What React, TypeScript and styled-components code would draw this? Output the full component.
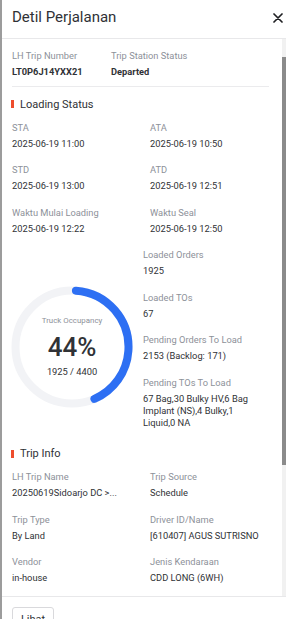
import styled, { createGlobalStyle } from "styled-components";

const GlobalStyle = createGlobalStyle`
  html, body {
    margin: 0;
    padding: 0;
    background: #ffffff;
    overflow: hidden;
  }
  body {
    font-family: Roboto, "Liberation Sans", Arial, sans-serif;
    color: #333333;
  }
`;

const Panel = styled.div`
  box-sizing: border-box;
  width: 297px;
  border-left: 2px solid #9c9c9c;
  background: #ffffff;
  display: flex;
  flex-direction: column;
`;

const Header = styled.div`
  height: 38px;
  border-bottom: 1px solid #e8e8ea;
  display: flex;
  align-items: center;
  justify-content: space-between;
  padding: 0 14px 0 10px;
`;

const Title = styled.h1`
  margin: 0;
  font-size: 15px;
  font-weight: 400;
  color: #2f3136;
  line-height: 20px;
  margin-top: -4px;
`;

const CloseBtn = styled.button`
  border: none;
  background: none;
  padding: 0;
  width: 10px;
  height: 10px;
  display: flex;
  cursor: pointer;
  margin-top: -3px;
`;

const Body = styled.div`
  height: 557px;
  flex: none;
  display: flex;
`;

const Scroll = styled.div`
  flex: 1;
  min-width: 0;
  overflow: hidden;
  box-sizing: border-box;
  padding: 10px 13px 24px 10px;
`;

const Track = styled.div`
  width: 15px;
  flex: none;
  background: #f1f1f1;
  display: flex;
  flex-direction: column;
`;

const Arrow = styled.div<{ $down?: boolean }>`
  height: 15px;
  flex: none;
  display: flex;
  align-items: center;
  justify-content: center;

  &::after {
    content: "";
    border-left: 4px solid transparent;
    border-right: 4px solid transparent;
    ${(p) =>
      p.$down
        ? "border-top: 4px solid #a3a3a3;"
        : "border-bottom: 4px solid #a3a3a3;"}
  }
`;

const ThumbArea = styled.div`
  flex: 1;
  padding-top: 3px;
`;

const Thumb = styled.div`
  height: 408px;
  background: #8b8b8b;
`;

const TopRow = styled.div`
  display: grid;
  grid-template-columns: 99px 1fr;
  padding-bottom: 8px;
  border-bottom: 1px solid #ebebed;
`;

const SectionTitle = styled.div<{ $top: number }>`
  display: flex;
  align-items: center;
  gap: 6px;
  margin-top: ${(p) => p.$top}px;
  height: 16px;
  font-size: 11px;
  color: #2f3136;

  &::before {
    content: "";
    width: 3px;
    height: 8px;
    margin-left: -1px;
    background: #ee4d2d;
  }
`;

const Grid = styled.div`
  display: grid;
  grid-template-columns: 138px 1fr;
  row-gap: 13.5px;
  margin-top: 8.5px;
`;

const Field = styled.div``;

const Label = styled.div`
  font-size: 9.3px;
  line-height: 14px;
  color: #8d9199;
  white-space: nowrap;
`;

const Value = styled.div<{ $bold?: boolean }>`
  margin-top: 3px;
  font-size: 9.3px;
  line-height: 12px;
  color: #303236;
  font-weight: ${(p) => (p.$bold ? 700 : 400)};
`;

const Occupancy = styled.div`
  display: flex;
  margin-top: 13.5px;
`;

const GaugeCol = styled.div`
  width: 131px;
  flex: none;
`;

const Gauge = styled.div`
  position: relative;
  width: 122px;
  height: 122px;
  margin: 38px 0 0 -1px;
  display: flex;
  flex-direction: column;
  align-items: center;
  justify-content: center;

  svg {
    position: absolute;
    inset: 0;
  }
`;

const GaugeCaption = styled.div`
  font-size: 7.9px;
  line-height: 10px;
  color: #8d9199;
`;

const GaugePercent = styled.div`
  font-size: 26px;
  font-weight: 500;
  line-height: 30px;
  margin-top: 6px;
  color: #303236;
`;

const GaugeCount = styled.div`
  font-size: 9.3px;
  line-height: 12px;
  margin-top: 4px;
  color: #303236;
`;

const StatCol = styled.div`
  flex: 1;
  max-width: 112px;
  display: flex;
  flex-direction: column;
  gap: 13.5px;
`;

const Footer = styled.div`
  border-top: 1px solid #e8e8ea;
  padding: 10px 10px;
`;

const Button = styled.button`
  width: 42px;
  height: 24px;
  border: 1px solid #d9d9dc;
  border-radius: 3px;
  background: #ffffff;
  font-family: Roboto, "Liberation Sans", Arial, sans-serif;
  font-size: 11px;
  color: #303236;
  padding: 0;
`;

const loading = [
  ["STA", "2025-06-19 11:00"],
  ["ATA", "2025-06-19 10:50"],
  ["STD", "2025-06-19 13:00"],
  ["ATD", "2025-06-19 12:51"],
  ["Waktu Mulai Loading", "2025-06-19 12:22"],
  ["Waktu Seal", "2025-06-19 12:50"],
];

const stats = [
  ["Loaded Orders", "1925"],
  ["Loaded TOs", "67"],
  ["Pending Orders To Load", "2153 (Backlog: 171)"],
  ["Pending TOs To Load", "67 Bag,30 Bulky HV,6 Bag Implant (NS),4 Bulky,1 Liquid,0 NA"],
];

const tripInfo = [
  ["LH Trip Name", "20250619Sidoarjo DC >..."],
  ["Trip Source", "Schedule"],
  ["Trip Type", "By Land"],
  ["Driver ID/Name", "[610407] AGUS SUTRISNO"],
  ["Vendor", "in-house"],
  ["Jenis Kendaraan", "CDD LONG (6WH)"],
];

function Ring({ percent }: { percent: number }) {
  const r = 56.5;
  const c = 2 * Math.PI * r;
  return (
    <svg width="122" height="122" viewBox="0 0 122 122">
      <circle cx="61" cy="61" r={r} fill="none" stroke="#f2f3f6" strokeWidth="8" />
      <circle
        cx="61"
        cy="61"
        r={r}
        fill="none"
        stroke="#2d6ff3"
        strokeWidth="8"
        strokeLinecap="round"
        strokeDasharray={`${(c * percent) / 100 - 6} ${c}`}
        transform="rotate(-86 61 61)"
      />
    </svg>
  );
}

export default function App() {
  return (
    <Panel>
      <GlobalStyle />
      <Header>
        <Title>Detil Perjalanan</Title>
        <CloseBtn aria-label="close">
          <svg width="10" height="10" viewBox="0 0 10 10">
            <path d="M1 1L9 9M9 1L1 9" stroke="#1f2023" strokeWidth="1.7" strokeLinecap="round" />
          </svg>
        </CloseBtn>
      </Header>

      <Body>
        <Scroll>
          <TopRow>
            <Field>
              <Label>LH Trip Number</Label>
              <Value $bold>LT0P6J14YXX21</Value>
            </Field>
            <Field>
              <Label>Trip Station Status</Label>
              <Value $bold>Departed</Value>
            </Field>
          </TopRow>

          <SectionTitle $top={9}>Loading Status</SectionTitle>
          <Grid>
            {loading.map(([label, value]) => (
              <Field key={label}>
                <Label>{label}</Label>
                <Value>{value}</Value>
              </Field>
            ))}
          </Grid>

          <Occupancy>
            <GaugeCol>
              <Gauge>
                <Ring percent={44} />
                <GaugeCaption>Truck Occupancy</GaugeCaption>
                <GaugePercent>44%</GaugePercent>
                <GaugeCount>1925 / 4400</GaugeCount>
              </Gauge>
            </GaugeCol>
            <StatCol>
              {stats.map(([label, value]) => (
                <Field key={label}>
                  <Label>{label}</Label>
                  <Value>{value}</Value>
                </Field>
              ))}
            </StatCol>
          </Occupancy>

          <SectionTitle $top={17}>Trip Info</SectionTitle>
          <Grid>
            {tripInfo.map(([label, value]) => (
              <Field key={label}>
                <Label>{label}</Label>
                <Value>{value}</Value>
              </Field>
            ))}
          </Grid>
        </Scroll>
        <Track>
          <Arrow />
          <ThumbArea>
            <Thumb />
          </ThumbArea>
          <Arrow $down />
        </Track>
      </Body>

      <Footer>
        <Button>Lihat</Button>
      </Footer>
    </Panel>
  );
}
